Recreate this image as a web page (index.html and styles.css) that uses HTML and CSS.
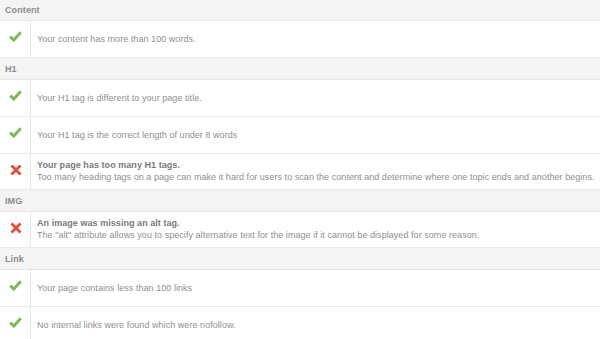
FILE: index.html
```html
<!DOCTYPE html>
<html>
<head>
<meta charset="utf-8">
<link rel="stylesheet" href="styles.css">
</head>
<body>
<div class="report">
  <div class="section-head first">Content</div>
  <div class="row">
    <div class="icon"><svg class="ok" viewBox="0 0 13 11" width="13" height="11"><path d="M1.2 5.6 L4.8 9 L11.8 1.2" /></svg></div>
    <div class="text"><div>Your content has more than 100 words.</div></div>
  </div>

  <div class="section-head">H1</div>
  <div class="row">
    <div class="icon"><svg class="ok" viewBox="0 0 13 11" width="13" height="11"><path d="M1.2 5.6 L4.8 9 L11.8 1.2" /></svg></div>
    <div class="text"><div>Your H1 tag is different to your page title.</div></div>
  </div>
  <div class="row">
    <div class="icon"><svg class="ok" viewBox="0 0 13 11" width="13" height="11"><path d="M1.2 5.6 L4.8 9 L11.8 1.2" /></svg></div>
    <div class="text"><div>Your H1 tag is the correct length of under 8 words</div></div>
  </div>
  <div class="row two">
    <div class="icon"><svg class="bad" viewBox="0 0 12 12" width="12" height="12"><path d="M1.5 1.5 L10.5 10.5 M10.5 1.5 L1.5 10.5" /></svg></div>
    <div class="text"><div class="title">Your page has too many H1 tags.</div><div>Too many heading tags on a page can make it hard for users to scan the content and determine where one topic ends and another begins.</div></div>
  </div>

  <div class="section-head">IMG</div>
  <div class="row two">
    <div class="icon"><svg class="bad" viewBox="0 0 12 12" width="12" height="12"><path d="M1.5 1.5 L10.5 10.5 M10.5 1.5 L1.5 10.5" /></svg></div>
    <div class="text"><div class="title">An image was missing an alt tag.</div><div>The "alt" attribute allows you to specify alternative text for the image if it cannot be displayed for some reason.</div></div>
  </div>

  <div class="section-head">Link</div>
  <div class="row">
    <div class="icon"><svg class="ok" viewBox="0 0 13 11" width="13" height="11"><path d="M1.2 5.6 L4.8 9 L11.8 1.2" /></svg></div>
    <div class="text"><div>Your page contains less than 100 links</div></div>
  </div>
  <div class="row">
    <div class="icon"><svg class="ok" viewBox="0 0 13 11" width="13" height="11"><path d="M1.2 5.6 L4.8 9 L11.8 1.2" /></svg></div>
    <div class="text"><div>No internal links were found which were nofollow.</div></div>
  </div>
</div>
</body>
</html>
```

FILE: styles.css
```css
html, body {
  margin: 0;
  padding: 0;
  background: #ffffff;
}
.report {
  font-family: "Liberation Sans", Arial, sans-serif;
  font-size: 9px;
  color: #8f8f8f;
  width: 600px;
}
.section-head {
  height: 22px;
  box-sizing: border-box;
  border-bottom: 1px solid #e6e6e6;
  background: #f4f4f4;
  padding-left: 5px;
  display: flex;
  align-items: center;
  color: #8c8c8c;
  font-weight: bold;
  letter-spacing: 0.1px;
}
.section-head.first {
  height: 21px;
}
.row {
  display: flex;
  height: 37px;
  box-sizing: border-box;
  border-bottom: 1px solid #ebebeb;
}
.row.two {
  height: 36px;
}
.icon {
  width: 31px;
  flex: none;
  box-sizing: border-box;
  border-right: 1px solid #e8e8e8;
  display: flex;
  justify-content: center;
  align-items: flex-start;
  padding-top: 10px;
}
.icon svg {
  display: block;
  fill: none;
  stroke-width: 3;
}
.ok { stroke: #7aba57; margin-left: 1px; }
.bad { stroke: #d9553d; stroke-width: 2.8; margin-left: 1px; }
.text {
  flex: 1;
  padding-left: 6px;
  display: flex;
  flex-direction: column;
  justify-content: center;
  line-height: 12px;
  padding-bottom: 1px;
  letter-spacing: 0.05px;
}
.title {
  font-weight: bold;
  color: #7a7a7a;
}
```
